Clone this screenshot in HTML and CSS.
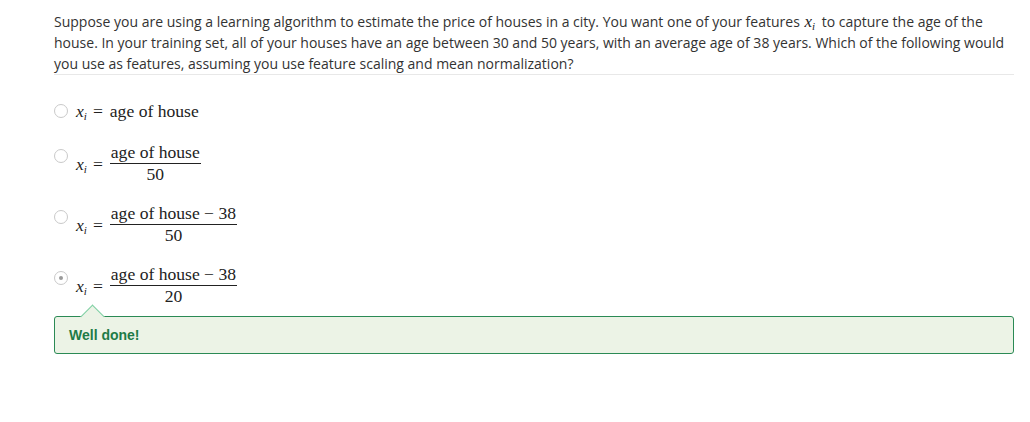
FILE: index.html
```html
<!DOCTYPE html>
<html>
<head>
<meta charset="utf-8">
<link rel="stylesheet" href="styles.css">
</head>
<body>
<div class="question">
  <p class="prompt">Suppose you are using a learning algorithm to estimate the price of houses in a city. You want one of your features <span class="mi inline">x<sub>i</sub></span> to capture the age of the house. In your training set, all of your houses have an age between 30 and 50 years, with an average age of 38 years. Which of the following would you use as features, assuming you use feature scaling and mean normalization?</p>

  <div class="options">
    <div class="option single">
      <span class="radio"></span>
      <span class="math"><span class="mi">x<sub>i</sub></span><span class="eq">=</span>age of house</span>
    </div>
    <div class="option">
      <span class="radio"></span>
      <span class="math"><span class="mi">x<sub>i</sub></span><span class="eq">=</span><span class="frac"><span class="num">age of house</span><span class="den">50</span></span></span>
    </div>
    <div class="option">
      <span class="radio"></span>
      <span class="math"><span class="mi">x<sub>i</sub></span><span class="eq">=</span><span class="frac"><span class="num">age of house − 38</span><span class="den">50</span></span></span>
    </div>
    <div class="option">
      <span class="radio checked"></span>
      <span class="math"><span class="mi">x<sub>i</sub></span><span class="eq">=</span><span class="frac"><span class="num">age of house − 38</span><span class="den">20</span></span></span>
    </div>
  </div>

  <div class="feedback">
    <span class="arrow"></span>
    <span class="feedback-text">Well done!</span>
  </div>
</div>
</body>
</html>
```

FILE: styles.css
```css
html, body {
  margin: 0;
  padding: 0;
  background: #fff;
}

.question {
  padding: 11px 16px 0 54px;
  font-family: "Open Sans", "Liberation Sans", sans-serif;
  color: #333;
}

.prompt {
  margin: 0;
  font-size: 14px;
  line-height: 21px;
  border-bottom: 1px solid #e8e8e8;
}

.mi {
  font-style: italic;
  font-family: "Liberation Serif", "DejaVu Serif", serif;
  color: #222;
}

.mi.inline {
  display: inline-block;
  font-size: 17px;
  line-height: 16px;
  margin: 0 3px 0 1px;
}

.mi sub {
  font-size: 11px;
  line-height: 0;
  vertical-align: -3px;
}

.options {
  display: flex;
  flex-direction: column;
  gap: 18px;
  margin-top: 27px;
}

.option {
  display: flex;
  align-items: flex-start;
  gap: 8px;
}

.option.single {
  margin-bottom: 4px;
}

.radio {
  width: 12px;
  height: 12px;
  border: 1px solid #c9c9c9;
  border-radius: 50%;
  background: #fff;
  flex: none;
  margin-top: 7px;
  position: relative;
}

.option.single .radio {
  margin-top: 2px;
}

.radio.checked::after {
  content: "";
  position: absolute;
  left: 4px;
  top: 4px;
  width: 4px;
  height: 4px;
  border-radius: 50%;
  background: #9a9a9a;
}

.math {
  display: inline-flex;
  align-items: center;
  font-family: "Liberation Serif", "DejaVu Serif", serif;
  font-size: 17.6px;
  line-height: 18px;
  color: #222;
}

.eq {
  margin: 0 7px 0 6px;
}

.frac {
  display: inline-flex;
  flex-direction: column;
  align-items: center;
}

.num {
  padding: 0 1px 1px 1px;
  line-height: 20px;
  border-bottom: 1px solid #222;
}

.den {
  line-height: 21px;
}

.option:not(.single) .mi {
  margin-top: 1px;
}

.feedback {
  position: relative;
  margin-top: 9px;
  height: 36px;
  border: 1px solid #2b8a55;
  border-radius: 3px;
  background: #ecf3e6;
  display: flex;
  align-items: center;
  padding-left: 14px;
}

.arrow {
  position: absolute;
  left: 29px;
  top: -9px;
  width: 16px;
  height: 16px;
  background: #ecf3e6;
  border-left: 1px solid #7fd0a4;
  border-top: 1px solid #7fd0a4;
  transform: rotate(45deg);
}

.feedback-text {
  font-family: "Liberation Sans", Arial, sans-serif;
  font-weight: bold;
  font-size: 14px;
  color: #1e7b47;
}
```
